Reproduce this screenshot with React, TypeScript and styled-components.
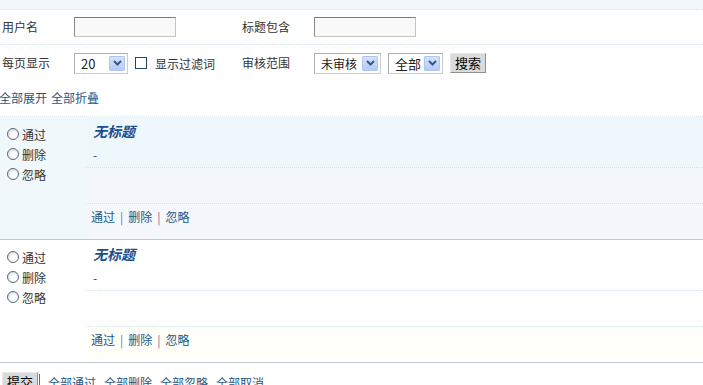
import React from 'react';
import styled, { createGlobalStyle } from 'styled-components';

const GlobalStyle = createGlobalStyle`
  html, body {
    margin: 0;
    padding: 0;
    background: #fff;
  }
  body {
    font-family: "Noto Sans CJK SC", "Liberation Sans", sans-serif;
    font-size: 12px;
    color: #333;
  }
`

const Page = styled.div`
  width: 703px;
  height: 385px;
  overflow: hidden;
`

const TopBand = styled.div`
  height: 9px;
  background: #f2f8fc;
  border-bottom: 1px dotted #d6dfe4;
`

const FilterRow = styled.div<{ last?: boolean }>`
  display: flex;
  align-items: center;
  height: ${p => (p.last ? 36 : 34)}px;
  border-bottom: ${p => (p.last ? 'none' : '1px dotted #d6dfe4')};
`

const Label = styled.span`
  flex-shrink: 0;
  width: 72px;
  padding-left: 2px;
  line-height: 16px;
`

const FieldCell = styled.div`
  display: flex;
  align-items: center;
  flex-shrink: 0;
  width: 166px;
  gap: 7px;

  & > * {
    flex-shrink: 0;
  }
`

const TextInput = styled.input`
  box-sizing: border-box;
  width: 102px;
  height: 20px;
  margin: 0;
  border: 1px solid #c4c4c4;
  border-top-color: #7a7a7a;
  border-left-color: #8a8a8a;
  background: #f9f9f9;
`

const SelectBox = styled.div<{ w: number }>`
  box-sizing: border-box;
  display: flex;
  align-items: center;
  justify-content: space-between;
  width: ${p => p.w}px;
  height: 21px;
  padding: 0 2px 0 6px;
  border: 1px solid #a9aeb4;
  border-right-color: #c8ccd0;
  border-bottom-color: #c8ccd0;
  background: #fff;
  color: #222;
  font-size: ${p => (p.w < 60 ? 13 : 12)}px;
  white-space: nowrap;
`

const ArrowButton = styled.span`
  box-sizing: border-box;
  display: flex;
  align-items: center;
  justify-content: center;
  flex-shrink: 0;
  width: 16px;
  height: 15px;
  background: linear-gradient(#d3e1fd, #b4cbf7);
  border: 1px solid #b0c6f2;
  border-radius: 1px;
`

const Check = styled.span`
  box-sizing: border-box;
  width: 12px;
  height: 12px;
  border: 1px solid #25465f;
  background: #fff;
`

const CheckLabel = styled.span`
  display: flex;
  align-items: center;
  gap: 8px;
  white-space: nowrap;
`

const Button = styled.button`
  box-sizing: border-box;
  height: 20px;
  padding: 0 4px;
  margin: 0;
  border: 1px solid #8f8f8f;
  border-top-color: #e8e8e8;
  border-left-color: #e8e8e8;
  background: #dadada;
  font-family: inherit;
  font-size: 13px;
  line-height: 16px;
  color: #000;
  white-space: nowrap;
`

const Link = styled.a`
  color: #1f5683;
  text-decoration: none;
  white-space: nowrap;
`

const ToggleLine = styled.div`
  display: flex;
  gap: 4px;
  margin: 9px 0 0 -1px;
  height: 26px;
  line-height: 16px;
`

const List = styled.div`
  border-top: 1px dotted #dbe6ec;
`

const Item = styled.div<{ active?: boolean }>`
  display: flex;
  background: ${p => (p.active ? '#f1f8fb' : '#fff')};
  border-bottom: 1px solid #bccbd3;
`

const Choices = styled.div`
  display: flex;
  flex-direction: column;
  gap: 4px;
  width: 86px;
  padding: 9px 0 0 7px;
  box-sizing: border-box;
`

const Choice = styled.label`
  display: flex;
  align-items: center;
  gap: 3px;
  height: 16px;
`

const Radio = styled.span`
  box-sizing: border-box;
  width: 12px;
  height: 12px;
  border-radius: 50%;
  border: 1px solid #55687a;
  background: radial-gradient(circle at 60% 65%, #fff 30%, #d6d6d6 90%);
`

const Content = styled.div`
  flex: 1;
  display: flex;
  flex-direction: column;
`

const Head = styled.div<{ active?: boolean }>`
  height: 51px;
  padding: 5px 0 0 7px;
  box-sizing: border-box;
  background: ${p => (p.active ? '#eef7fb' : 'transparent')};
  border-bottom: 1px dotted #d6dfe4;
`

const Title = styled.div`
  font-size: 14px;
  font-weight: bold;
  font-style: italic;
  color: #1a4e8e;
  line-height: 18px;
`

const Dash = styled.div`
  margin-top: 8px;
  line-height: 14px;
  color: #444;
`

const Body = styled.div<{ active?: boolean }>`
  height: 35px;
  background: ${p => (p.active ? '#f4f8fc' : 'transparent')};
  border-bottom: 1px dotted #d6dfe4;
`

const Actions = styled.div<{ active?: boolean }>`
  display: flex;
  align-items: flex-start;
  gap: 5px;
  height: 35px;
  box-sizing: border-box;
  padding: 5px 0 0 5px;
  line-height: 16px;
  background: ${p => (p.active ? '#f4f8fc' : '#fffffa')};
`

const Sep = styled.span`
  color: #7a6e96;
`

const Footer = styled.div`
  display: flex;
  align-items: center;
  gap: 8px;
  padding: 9px 0 0 2px;
`

const FooterBar = styled.span`
  width: 1px;
  height: 16px;
  margin-left: -7px;
  background: #6c6c6c;
`

function Chevron() {
  return (
    <svg width="9" height="6" viewBox="0 0 9 6">
      <path d="M1 1 L4.5 4.5 L8 1" fill="none" stroke="#3c5486" strokeWidth="2" />
    </svg>
  )
}

function Select(props: { value: string; width: number }) {
  return (
    <SelectBox w={props.width}>
      <span>{props.value}</span>
      <ArrowButton><Chevron /></ArrowButton>
    </SelectBox>
  )
}

function ReviewItem(props: { active?: boolean }) {
  const { active } = props
  return (
    <Item active={active}>
      <Choices>
        {['通过', '删除', '忽略'].map(c => (
          <Choice key={c}>
            <Radio />
            <span>{c}</span>
          </Choice>
        ))}
      </Choices>
      <Content>
        <Head active={active}>
          <Title>无标题</Title>
          <Dash>-</Dash>
        </Head>
        <Body active={active} />
        <Actions active={active}>
          <Link href="#">通过</Link>
          <Sep>|</Sep>
          <Link href="#">删除</Link>
          <Sep>|</Sep>
          <Link href="#">忽略</Link>
        </Actions>
      </Content>
    </Item>
  )
}

export default function App() {
  return (
    <Page>
      <GlobalStyle />
      <TopBand />
      <FilterRow>
        <Label>用户名</Label>
        <FieldCell><TextInput /></FieldCell>
        <Label>标题包含</Label>
        <FieldCell><TextInput /></FieldCell>
      </FilterRow>
      <FilterRow last>
        <Label>每页显示</Label>
        <FieldCell>
          <Select value="20" width={54} />
          <CheckLabel><Check />显示过滤词</CheckLabel>
        </FieldCell>
        <Label>审核范围</Label>
        <FieldCell>
          <Select value="未审核" width={67} />
          <Select value="全部" width={55} />
          <Button>搜索</Button>
        </FieldCell>
      </FilterRow>
      <ToggleLine>
        <Link href="#">全部展开</Link>
        <Link href="#">全部折叠</Link>
      </ToggleLine>
      <List>
        <ReviewItem active />
        <ReviewItem />
      </List>
      <Footer>
        <Button>提交</Button>
        <FooterBar />
        <Link href="#">全部通过</Link>
        <Link href="#">全部删除</Link>
        <Link href="#">全部忽略</Link>
        <Link href="#">全部取消</Link>
      </Footer>
    </Page>
  )
}
